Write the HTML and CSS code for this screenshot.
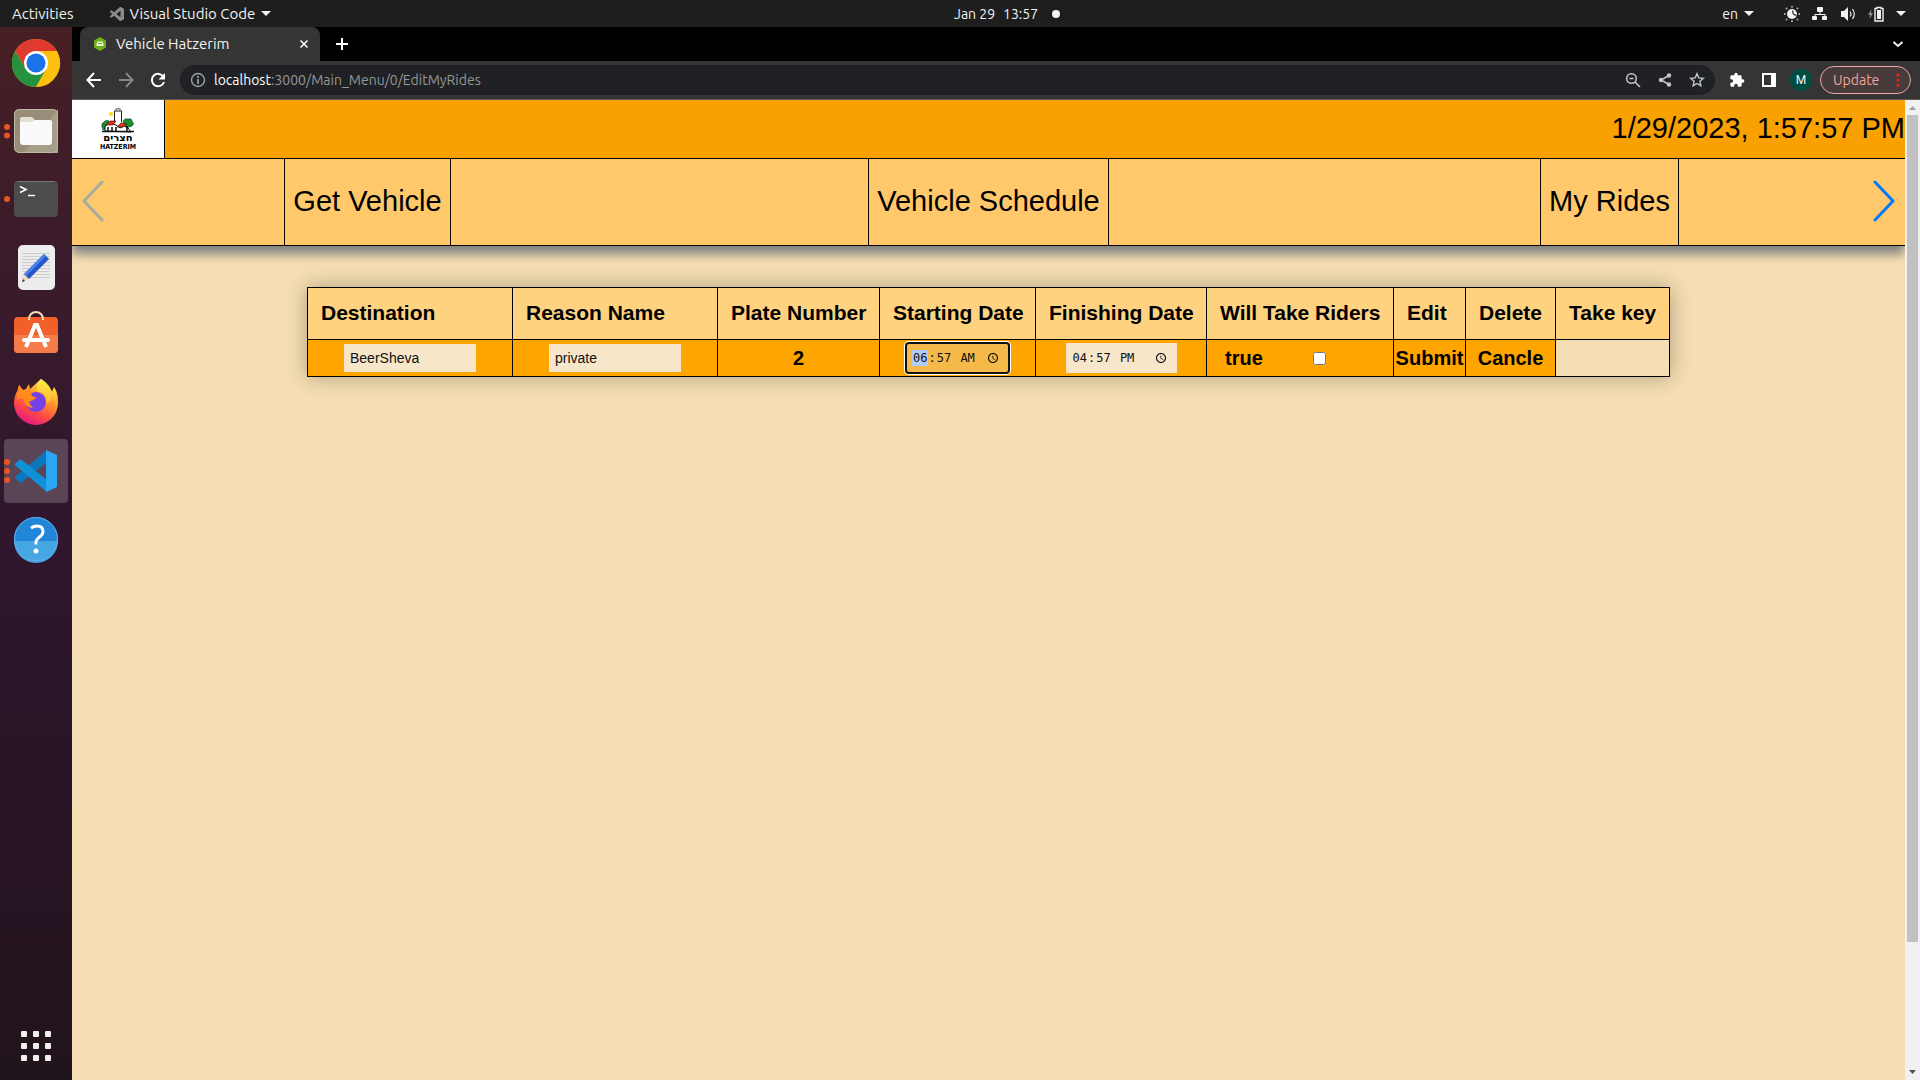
FILE: index.html
```html
<!DOCTYPE html>
<html lang="en">
<head>
<meta charset="utf-8">
<title>Vehicle Hatzerim</title>
<link rel="stylesheet" href="styles.css">
</head>
<body>
<div class="desktop">
  <header class="topbar">
    <div class="topbar-left">
      <button class="sys-btn" type="button">Activities</button>
      <button class="sys-btn app-menu" type="button">
        <svg width="14" height="14" viewBox="0 0 24 24" fill="#8b8b8b"><path d="M23.15 2.587L18.21.21a1.494 1.494 0 0 0-1.705.29l-9.46 8.63-4.12-3.128a.999.999 0 0 0-1.276.057L.327 7.261A1 1 0 0 0 .326 8.74L3.899 12 .326 15.26a1 1 0 0 0 .001 1.479L1.65 17.94a.999.999 0 0 0 1.276.057l4.12-3.128 9.46 8.63a1.492 1.492 0 0 0 1.704.29l4.942-2.377A1.5 1.5 0 0 0 24 20.06V3.939a1.5 1.5 0 0 0-.85-1.352zm-5.146 14.861L10.826 12l7.178-5.448v10.896z"/></svg>
        Visual Studio Code
        <svg width="10" height="6" viewBox="0 0 10 6" fill="#f2f2f2"><path d="M0 0h10L5 5z"/></svg>
      </button>
    </div>
    <button class="sys-btn clock" type="button"><span>Jan 29</span><span>13:57</span><i class="notice"></i></button>
    <div class="topbar-right">
      <button class="sys-btn lang" type="button">en
        <svg width="10" height="6" viewBox="0 0 10 6" fill="#f2f2f2"><path d="M0 0h10L5 5z"/></svg>
      </button>
      <button class="sys-btn status" type="button" aria-label="System menu">
        <svg width="16" height="16" viewBox="0 0 16 16"><circle cx="8" cy="8" r="5" fill="#f2f2f2"/><path d="M9 4.500a3.200 3.200 0 0 0 3.500 4.500" fill="none" stroke="#1e1e1e" stroke-width="1.200"/><g fill="#a8a8a8"><path d="M7 0h2v1.500H7zM7 14.500h2V16H7zM0 7h1.500v2H0zM14.500 7H16v2h-1.500z"/><circle cx="2.500" cy="2.500" r="1"/><circle cx="13.500" cy="2.500" r="1"/><circle cx="2.500" cy="13.500" r="1"/><circle cx="13.500" cy="13.500" r="1"/></g></svg>
        <svg width="16" height="16" viewBox="0 0 16 16" fill="#f2f2f2"><rect x="5" y="1" width="6" height="5" rx="1"/><path d="M7.500 5h1v3h5v3h-1V9h-9v2h-1V8h5z"/><rect x="0" y="10" width="5" height="4" rx="1"/><rect x="10" y="10" width="5" height="4" rx="1"/></svg>
        <svg width="16" height="16" viewBox="0 0 16 16"><path d="M1 5h3l4-4v14l-4-4H1z" fill="#f2f2f2"/><path d="M10 5.500q2 2.500 0 5M12.500 3q3.500 5 0 10" fill="none" stroke="#f2f2f2" stroke-width="1.200"/></svg>
        <svg width="16" height="16" viewBox="0 0 16 16"><path d="M3.500 3L0 9h2l-.5 4L5 7H3z" fill="#8b8b8b"/><path d="M7 2.500h2v-1h4v1h2v12.500H7z" fill="none" stroke="#f2f2f2" stroke-width="1.400"/><path d="M9 4h4v9H9z" fill="#f2f2f2"/></svg>
        <svg width="10" height="6" viewBox="0 0 10 6" fill="#f2f2f2"><path d="M0 0h10L5 5z"/></svg>
      </button>
    </div>
  </header>

  <nav class="dock" aria-label="Dock">
    <button class="dock-item" type="button" aria-label="Chrome">
      <svg viewBox="0 0 64 64"><circle cx="32" cy="32" r="24" fill="#fbbc05"/><path d="M11.200 20A24 24 0 0 1 52.800 20H32L21.600 38z" fill="#e03a2f"/><path d="M11.200 20A24 24 0 0 0 32 56L42.400 38 32 32 21.600 38z" fill="#25923f"/><path d="M52.800 20A24 24 0 0 1 32 56L42.400 38V20z" fill="#fdc010"/><circle cx="32" cy="32" r="12" fill="#fff"/><circle cx="32" cy="32" r="9.500" fill="#1a73e8"/></svg>
    </button>
    <button class="dock-item" type="button" aria-label="Files">
      <svg viewBox="0 0 64 64"><rect x="10" y="10" width="44" height="44" rx="5" fill="#978d78"/><path d="M54 10v44H20z" fill="#a79e89"/><rect x="10.500" y="10.500" width="43" height="43" rx="5" fill="none" stroke="#c0b9a8"/><path d="M16 20a2 2 0 0 1 2-2h10l4 4h14v8H16z" fill="#e4e0d6"/><path d="M16 23h12l3-2h15a2 2 0 0 1 2 2v20a3 3 0 0 1-3 3H19a3 3 0 0 1-3-3z" fill="#fafafa"/><g fill="#e95420"><circle cx="3" cy="28" r="3"/><circle cx="3" cy="36.500" r="3"/></g></svg>
    </button>
    <button class="dock-item" type="button" aria-label="Terminal">
      <svg viewBox="0 0 64 64"><rect x="10" y="14" width="44" height="36" rx="4" fill="#4c4c4c"/><path d="M13 14.500h38" stroke="#777"/><path d="M16 19.500l6 3-6 3M24 28.500h7" fill="none" stroke="#fff" stroke-width="1.600"/><circle cx="3" cy="32" r="3" fill="#e95420"/></svg>
    </button>
    <button class="dock-item" type="button" aria-label="Text Editor">
      <svg viewBox="0 0 64 64"><rect x="14" y="10" width="37" height="45" rx="5" fill="#ededed"/><path d="M18 18.500h28M18 21.500h28M18 24.500h28M18 27.500h28M18 30.500h28M18 33.500h28M18 36.500h28M18 39.500h28M18 42.500h28" stroke="#ccc"/><path d="M18 47l2-8 5 5z" fill="#f4d6ba"/><path d="M18 47l1-3 2 2z" fill="#333"/><path d="M20 39l20-20 5 5-20 20z" fill="#2456c8"/><path d="M20 39l20-20 2 2-20 20z" fill="#4b83ea"/></svg>
    </button>
    <button class="dock-item" type="button" aria-label="Ubuntu Software">
      <svg viewBox="0 0 64 64"><rect x="10" y="14" width="44" height="36" rx="4" fill="#f1602a"/><path d="M10 32h44v14a4 4 0 0 1-4 4H14a4 4 0 0 1-4-4z" fill="#f47c4b"/><path d="M25 17v-1a7 7 0 0 1 14 0v1" fill="none" stroke="#f8dcb4" stroke-width="2"/><path d="M22 44l9-22h2l9 22" fill="none" stroke="#fff" stroke-width="4"/><path d="M20 37h24" stroke="#fff" stroke-width="4" stroke-linecap="round"/></svg>
    </button>
    <button class="dock-item" type="button" aria-label="Firefox">
      <svg viewBox="0 0 64 64"><defs><linearGradient id="fx" x1=".8" y1="0" x2=".3" y2="1"><stop offset="0" stop-color="#fff44f"/><stop offset=".4" stop-color="#ff9a2a"/><stop offset=".7" stop-color="#ff4a45"/><stop offset="1" stop-color="#e31587"/></linearGradient><linearGradient id="fy" x1=".5" y1="0" x2=".5" y2="1"><stop offset="0" stop-color="#fff04c"/><stop offset="1" stop-color="#ffb52c"/></linearGradient></defs><path d="M37 8c4 3 6 6 8 10l3 3 2-5c4 6 4 11 4 16a22 22 0 0 1-44 0c0-5 1-9 4-13l1-5 4 5 3-1 3-5 1 5z" fill="url(#fx)"/><circle cx="32" cy="31" r="10" fill="#7542e5"/><path d="M37 8c-4 5-5 9-3 13 6-1 10 5 8 12 5-2 7-7 5-12 3 3 4 7 4 10 2-5 1-10-1-14l-2 4c-2-6-6-10-11-13z" fill="url(#fy)"/><path d="M15 14l5 6 6-2 2 7 5 2-8 4c1 3 3 4 4 6-5 0-9-4-9-9-3-2-6 0-7 2 0-6 0-11 2-16z" fill="#ff8a1e"/></svg>
    </button>
    <button class="dock-item active" type="button" aria-label="Visual Studio Code">
      <svg viewBox="0 0 64 64"><path d="M11 39l4 4q1 1 3 0l25-20V11l-31 26q-2 1-1 2z" fill="#0b78bd"/><path d="M11 25l4-4q1-1 3 0l25 20v12L12 27q-2-1-1-2z" fill="#1190d6"/><path d="M42 11l11 5v32l-11 5z" fill="#2aa6f2"/><g fill="#e95420"><circle cx="3" cy="23" r="3"/><circle cx="3" cy="32" r="3"/><circle cx="3" cy="41" r="3"/></g></svg>
    </button>
    <button class="dock-item" type="button" aria-label="Help">
      <svg viewBox="0 0 64 64"><circle cx="32" cy="32" r="22" fill="#2186d8"/><path d="M10 34a22 22 0 0 0 44 0z" fill="#46a5e3"/><circle cx="32" cy="32" r="21.500" fill="none" stroke="#5fb0e8"/><path d="M27 21q3-2 6-2 6 0 6 5.500 0 3-4 6t-3 7" fill="none" stroke="#fff" stroke-width="3"/><circle cx="32" cy="44" r="2.500" fill="#fff"/></svg>
    </button>
    <button class="dock-item apps" type="button" aria-label="Show Applications">
      <svg viewBox="0 0 64 64" fill="#eeeeea"><rect x="17" y="17" width="6" height="6" rx="1"/><rect x="29" y="17" width="6" height="6" rx="1"/><rect x="41" y="17" width="6" height="6" rx="1"/><rect x="17" y="29" width="6" height="6" rx="1"/><rect x="29" y="29" width="6" height="6" rx="1"/><rect x="41" y="29" width="6" height="6" rx="1"/><rect x="17" y="41" width="6" height="6" rx="1"/><rect x="29" y="41" width="6" height="6" rx="1"/><rect x="41" y="41" width="6" height="6" rx="1"/></svg>
    </button>
  </nav>

  <section class="browser">
    <div class="tabstrip">
      <div class="tab">
        <svg width="14" height="14" viewBox="0 0 14 14"><path d="M7 0l6 3.500v7L7 14l-6-3.500v-7z" fill="#6cae1c"/><path d="M3.500 9V7l1-2.500h5l1 2.500v2z" fill="#e9f3dc"/><path d="M5 6.500h4" stroke="#6cae1c"/></svg>
        <span class="tab-title">Vehicle Hatzerim</span>
        <button class="bare" type="button" aria-label="Close tab"><svg width="16" height="16" viewBox="0 0 16 16"><path d="M4.500 4.500l7 7m0-7l-7 7" stroke="#f2f2f2" stroke-width="1.700"/></svg></button>
      </div>
      <button class="bare new-tab" type="button" aria-label="New tab"><svg width="16" height="16" viewBox="0 0 16 16"><path d="M8 2v12M2 8h12" stroke="#fff" stroke-width="2"/></svg></button>
      <button class="bare tab-search" type="button" aria-label="Search tabs"><svg width="16" height="16" viewBox="0 0 16 16"><path d="M3.500 6L8 10l4.500-4" fill="none" stroke="#f2f2f2" stroke-width="2"/></svg></button>
    </div>
    <div class="toolbar">
      <button class="tool" type="button" aria-label="Back"><svg width="16" height="16" viewBox="0 0 16 16" fill="none" stroke="#fff" stroke-width="2"><path d="M15 8H2M8 1L1.500 8 8 15"/></svg></button>
      <button class="tool" type="button" aria-label="Forward"><svg width="16" height="16" viewBox="0 0 16 16" fill="none" stroke="#868686" stroke-width="2"><path d="M1 8h13M8 1l6.500 7L8 15"/></svg></button>
      <button class="tool" type="button" aria-label="Reload"><svg width="16" height="16" viewBox="0 0 16 16"><path d="M13.500 5A6.200 6.200 0 1 0 14 10" fill="none" stroke="#fff" stroke-width="2"/><path d="M15 1v6.500H8.500z" fill="#fff"/></svg></button>
      <div class="omnibox">
        <svg width="16" height="16" viewBox="0 0 16 16"><circle cx="8" cy="8" r="6.500" fill="none" stroke="#9aa0a6" stroke-width="1.400"/><path d="M8 4v2M8 7v5" stroke="#9aa0a6" stroke-width="1.800"/></svg>
        <div class="url"><b>localhost</b>:3000/Main_Menu/0/EditMyRides</div>
        <button class="tool" type="button" aria-label="Zoom"><svg width="16" height="16" viewBox="0 0 16 16" fill="none" stroke="#c4c7c9" stroke-width="1.500"><circle cx="6.500" cy="6.500" r="4.800"/><path d="M10 10l5 5M4.500 6.500h4"/></svg></button>
        <button class="tool" type="button" aria-label="Share"><svg width="16" height="16" viewBox="0 0 16 16" fill="#c4c7c9"><path d="M12 3.500L4 8l8 4.500" fill="none" stroke="#c4c7c9" stroke-width="1.500"/><circle cx="12" cy="3.500" r="2.200"/><circle cx="4" cy="8" r="2.200"/><circle cx="12" cy="12.500" r="2.200"/></svg></button>
        <button class="tool" type="button" aria-label="Bookmark"><svg width="16" height="16" viewBox="0 0 16 16"><path d="M8 1.800l1.800 4.100 4.500.4-3.400 3 1 4.500L8 11.500l-3.900 2.300 1-4.500-3.400-3 4.500-.4z" fill="none" stroke="#c4c7c9" stroke-width="1.400"/></svg></button>
      </div>
      <button class="tool" type="button" aria-label="Extensions"><svg width="16" height="16" viewBox="0 0 24 24" fill="#fff"><path d="M20.500 11H19V7a2 2 0 0 0-2-2h-4V3.500a2.500 2.500 0 0 0-5 0V5H4a2 2 0 0 0-2 2v3.800h1.500a2.700 2.700 0 0 1 0 5.400H2V20a2 2 0 0 0 2 2h3.800v-1.500a2.700 2.700 0 0 1 5.400 0V22H17a2 2 0 0 0 2-2v-4h1.500a2.500 2.500 0 0 0 0-5z"/></svg></button>
      <button class="tool" type="button" aria-label="Side panel"><svg width="16" height="16" viewBox="0 0 16 16"><path d="M1 1h14v14H1z" fill="#fff"/><path d="M3 3h7v10H3z" fill="#353535"/></svg></button>
      <button class="tool" type="button" aria-label="Profile"><span class="avatar">M</span></button>
      <button class="update" type="button">Update <svg width="4" height="16" viewBox="0 0 4 16" fill="#e8271b"><circle cx="2" cy="3" r="1.600"/><circle cx="2" cy="8" r="1.600"/><circle cx="2" cy="13" r="1.600"/></svg></button>
    </div>

    <div class="viewport">
      <main class="page">
        <header class="banner">
          <a class="logo" href="#" aria-label="Hatzerim">
            <svg width="36" height="44" viewBox="0 0 36 44"><circle cx="11" cy="7" r="2" fill="#ffd800"/><path d="M14.500 15V4h7v11" fill="#fff" stroke="#222"/><path d="M15 3.500q3-4 6 0" fill="none" stroke="#888" stroke-width="1.500"/><path d="M2 20q-1-4 2-5 2-3 5-1l-2 8-4 1z" fill="#1e8f2d" stroke="#143" stroke-width=".6"/><path d="M23 15q1-4 5-3 4-1 4 2 3 3 0 5-4 2-6 1z" fill="#1e8f2d" stroke="#143" stroke-width=".6"/><path d="M5 24v-5l5-3 6 2 4 3 4-2 4 2 3 4z" fill="#fff" stroke="#111"/><path d="M6 18l4-4h6l-3 4z" fill="#f03010" stroke="#111" stroke-width=".6"/><path d="M17 20l4-4 6 1-4 3z" fill="#f03010" stroke="#111" stroke-width=".6"/><path d="M8 20v4M12 20v4M16 20v4M27 19v5" stroke="#111" stroke-width="1.500"/><path d="M2 24.500h32" stroke="#111" stroke-width="1.500"/><text class="logo-he" x="18" y="34" text-anchor="middle">חצרים</text><text class="logo-en" x="18" y="42" text-anchor="middle">HATZERIM</text></svg>
          </a>
          <time class="stamp">1/29/2023, 1:57:57 PM</time>
        </header>
        <nav class="menu">
          <button class="arrow prev" type="button" aria-label="Previous"><svg width="22" height="42" viewBox="0 0 22 42"><path d="M20 2L2 21l18 19" fill="none" stroke="#007aff" stroke-width="3" stroke-linecap="round" stroke-linejoin="round"/></svg></button>
          <div class="slide"><a href="#">Get Vehicle</a></div>
          <div class="slide"><a href="#">Vehicle Schedule</a></div>
          <div class="slide"><a href="#">My Rides</a></div>
          <button class="arrow next" type="button" aria-label="Next"><svg width="22" height="42" viewBox="0 0 22 42"><path d="M2 2l18 19L2 40" fill="none" stroke="#007aff" stroke-width="3" stroke-linecap="round" stroke-linejoin="round"/></svg></button>
        </nav>
        <table class="rides">
          <colgroup><col class="c-text"><col class="c-text"><col class="c-plate"><col class="c-start"><col class="c-finish"><col class="c-riders"><col class="c-edit"><col class="c-delete"><col class="c-key"></colgroup>
          <thead>
            <tr><th scope="col">Destination</th><th scope="col">Reason Name</th><th scope="col">Plate Number</th><th scope="col">Starting Date</th><th scope="col">Finishing Date</th><th scope="col">Will Take Riders</th><th scope="col">Edit</th><th scope="col">Delete</th><th scope="col">Take key</th></tr>
          </thead>
          <tbody>
            <tr>
              <td><input class="field" type="text" value="BeerSheva" aria-label="Destination"></td>
              <td><input class="field" type="text" value="private" aria-label="Reason Name"></td>
              <td>2</td>
              <td><input class="time" type="time" value="06:57" aria-label="Starting Date" autofocus></td>
              <td><input class="time" type="time" value="16:57" aria-label="Finishing Date"></td>
              <td><label class="riders">true <input type="checkbox"></label></td>
              <td><button class="action" type="button">Submit</button></td>
              <td><button class="action" type="button">Cancle</button></td>
              <td class="empty"></td>
            </tr>
          </tbody>
        </table>
      </main>
      <div class="scrollbar" aria-hidden="true">
        <svg width="15" height="15" viewBox="0 0 15 15"><path d="M4 10l3.500-4 3.500 4z" fill="#a0a0a0"/></svg>
        <div class="track"><div class="thumb"></div></div>
        <svg width="15" height="15" viewBox="0 0 15 15"><path d="M4 5l3.500 4L11 5z" fill="#505050"/></svg>
      </div>
    </div>
  </section>
</div>
</body>
</html>
```
FILE: styles.css
```css
* { box-sizing: border-box; }

body {
  margin: 0;
  font-family: "Liberation Sans", Arial, sans-serif;
  color: #000;
}

button {
  margin: 0;
  padding: 0;
  border: 0;
  background: none;
  color: inherit;
  font: inherit;
}

svg { display: block; flex: none; }

.desktop {
  display: grid;
  grid-template: 27px 1fr / 72px 1fr;
  height: 100vh;
  overflow: hidden;
}

/* System bar */
.topbar {
  grid-column: 1 / -1;
  display: flex;
  align-items: center;
  background: #1e1e1e;
  color: #f2f2f2;
  font: 14px/20px "Ubuntu", "Noto Sans", sans-serif;
}

.topbar-left {
  display: flex;
  gap: 36px;
  flex: 0 0 50%;
  padding-left: 12px;
  margin-right: -6px;
  font-size: 15px;
}

.sys-btn { display: flex; align-items: center; gap: 6px; white-space: nowrap; }
.clock { gap: 8px; }
.notice { width: 8px; height: 8px; margin-left: 6px; border-radius: 50%; background: #f2f2f2; }
.topbar-right { display: flex; gap: 30px; margin-left: auto; padding-right: 14px; }
.status { gap: 12px; }

/* Dock */
.dock {
  display: flex;
  flex-direction: column;
  gap: 4px;
  padding: 4px 4px 2px;
  background: linear-gradient(#471f24, #3a1b2b 22%, #2f162d 50%, #24141f 90%, #20141c);
}

.dock-item { width: 64px; height: 64px; border-radius: 4px; }
.dock-item.active { background: #594556; }
.apps { margin-top: auto; }

/* Browser chrome */
.browser {
  display: grid;
  grid-template-rows: 34px 39px 1fr;
  min-width: 0;
  min-height: 0;
}

.tabstrip, .toolbar {
  display: flex;
  align-items: center;
  color: #f2f2f2;
  font: 14px/20px "Ubuntu", "Noto Sans", sans-serif;
}

.tabstrip { background: #000; padding: 0 14px 0 8px; }

.tab {
  display: flex;
  align-items: center;
  gap: 9px;
  width: 240px;
  height: 34px;
  padding: 0 8px 0 13px;
  border-radius: 8px 8px 0 0;
  background: #353535;
}

.tab-title { flex: 1; font-size: 15px; }
.new-tab { margin-left: 14px; }
.tab-search { margin-left: auto; }

.toolbar { background: #353535; border-bottom: 1px solid #5c5c5c; padding: 0 9px 0 6px; }
.tool { display: grid; place-items: center; width: 32px; height: 30px; flex: none; }

.omnibox {
  display: flex;
  align-items: center;
  flex: 1;
  height: 30px;
  margin: 0 6px;
  padding: 0 2px 0 10px;
  border-radius: 15px;
  background: #202124;
}

.url { flex: 1; padding-left: 8px; color: #969798; }
.url b { color: #fff; font-weight: 400; }

.avatar {
  display: grid;
  place-items: center;
  width: 22px;
  height: 22px;
  border-radius: 50%;
  background: #004d40;
  font: 12px/22px Roboto, sans-serif;
}

.update {
  display: flex;
  align-items: center;
  justify-content: space-between;
  width: 91px;
  height: 28px;
  margin-left: 3px;
  padding: 0 10px 0 12px;
  border: 1px solid #f1a59d;
  border-radius: 14px;
  background: #473b3b;
  color: #f1a59d;
}

/* Page */
.viewport { display: flex; min-height: 0; }
.page { flex: 1; overflow: hidden; background: #f5deb3; }

.banner {
  display: flex;
  justify-content: space-between;
  height: 59px;
  border-bottom: 1px solid #000;
  background: #f8a100;
}

.logo {
  display: grid;
  place-items: center;
  width: 93px;
  border-right: 1px solid #000;
  background: #fff;
}

.logo-he { font: bold 10px "DejaVu Sans", sans-serif; }
.logo-en { font: bold 7px "Liberation Sans Narrow", "DejaVu Sans Condensed", sans-serif; }
.stamp { font-size: 29px; line-height: 57px; }

.menu {
  position: relative;
  display: grid;
  grid-template-columns: repeat(3, 1fr);
  column-gap: 30px;
  height: 87px;
  border-bottom: 1px solid #000;
  background: #ffc96b;
  box-shadow: 0 8px 10px gray;
}

.slide { display: flex; justify-content: center; }

.slide a {
  padding: 0 8px;
  border: solid #000;
  border-width: 0 1px;
  color: #000;
  font-size: 29px;
  line-height: 85px;
  text-decoration: none;
}

.arrow { position: absolute; top: 21px; }
.prev { left: 10px; opacity: .35; }
.next { right: 10px; }

.rides {
  width: 1363px;
  max-width: 100%;
  margin: 41px auto 0;
  table-layout: fixed;
  border-collapse: collapse;
  box-shadow: 0 0 20px rgba(0, 0, 0, .3);
  font-weight: bold;
}

.c-text { width: 205px; }
.c-plate { width: 162px; }
.c-start { width: 156px; }
.c-finish { width: 171px; }
.c-riders { width: 187px; }
.c-edit { width: 72px; }
.c-delete { width: 90px; }
.c-key { width: 114px; }

.rides th, .rides td { border: 1px solid #000; white-space: nowrap; }

.rides th {
  height: 52px;
  padding: 0 13px 2px;
  background: #ffd280;
  font-size: 21px;
  line-height: 24px;
  text-align: left;
}

.rides td {
  height: 37px;
  padding: 0;
  background: #ffa500;
  font-size: 20px;
  line-height: 24px;
  text-align: center;
}

.rides td.empty { background: none; }
.action { display: block; margin: 0 auto; }

.field, .time {
  display: block;
  margin: 0 auto;
  border: 0;
  background: #f7e6c9;
  color: #111;
}

.field { width: 132px; height: 28px; padding: 0 6px; font: 14px "Liberation Sans", Arial, sans-serif; }
.time { width: 111px; height: 30px; padding: 0 6px; font: 12px "DejaVu Sans Mono", monospace; }
.time:focus { width: 101px; height: 28px; padding: 0 5px; background: #f5b94a; outline: 2px solid #101010; border-radius: 2px; box-shadow: 0 0 0 3px #fff; }
.time::-webkit-datetime-edit-hour-field { -webkit-text-fill-color: #111; }
.time:focus::-webkit-datetime-edit-hour-field { background-image: linear-gradient(#b0cdf8, #b0cdf8); }

.riders { display: flex; align-items: center; justify-content: space-between; padding: 0 67px 0 18px; }
.riders input { width: 13px; height: 13px; margin: 0; }

.scrollbar { display: flex; flex-direction: column; width: 15px; background: #f1f1f1; }
.track { flex: 1; padding: 0 2px; }
.thumb { height: 87%; background: #c1c1c1; }
```
